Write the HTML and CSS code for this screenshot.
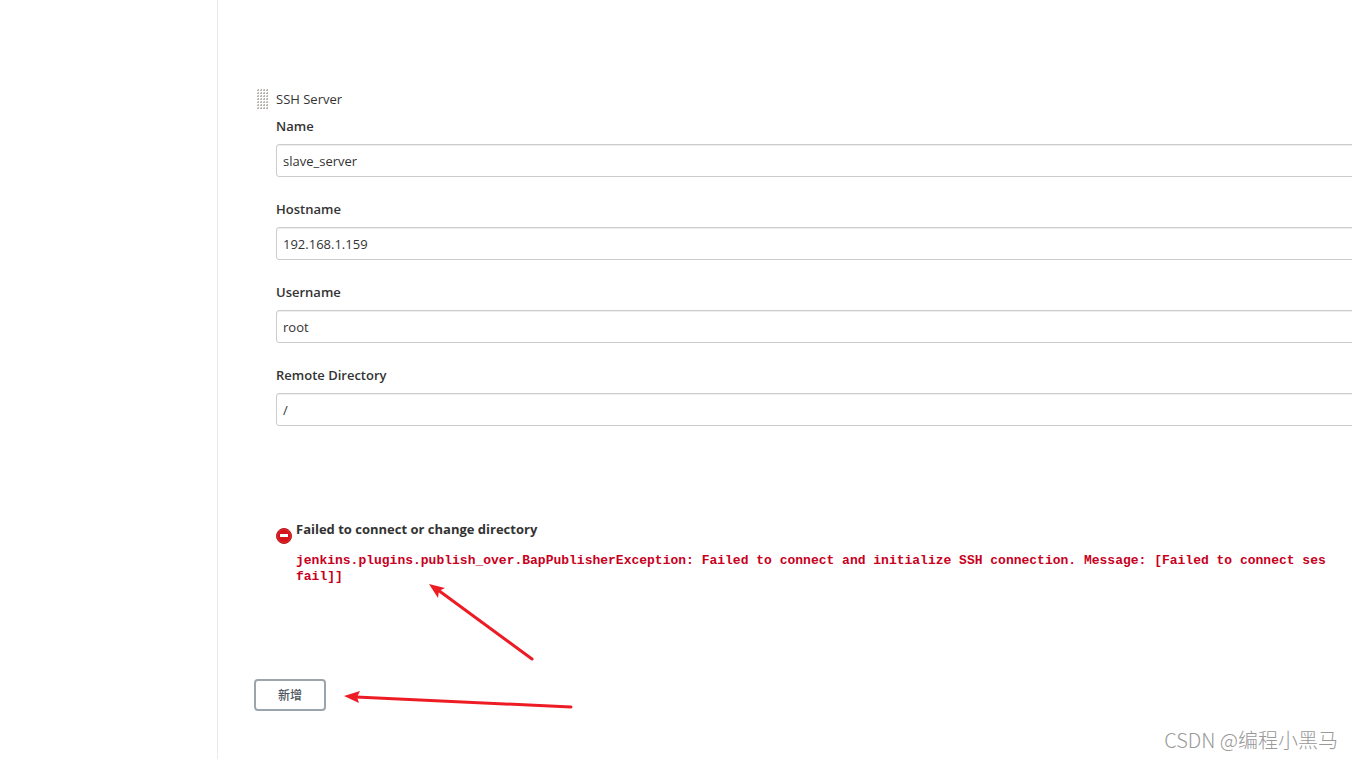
FILE: index.html
```
<!DOCTYPE html>
<html lang="zh-CN">
<head>
<meta charset="utf-8">
<title>SSH Server</title>
<link rel="stylesheet" href="styles.css">
</head>
<body>
<div class="page">
  <aside class="side"></aside>
  <main class="main">
    <form class="server">
      <div class="server-head">
        <svg class="grip" width="12" height="21" aria-hidden="true">
          <defs><pattern id="dots" width="3" height="3" patternUnits="userSpaceOnUse"><path d="M1 0h1v2h-2v-1h1z" fill="#b8b4ae"/><path d="M0 0h1v1h-1z" fill="#e3e1de"/></pattern></defs>
          <rect width="12" height="21" fill="url(#dots)"/>
        </svg>
        <span>SSH Server</span>
      </div>
      <div class="fields">
        <div class="field"><label for="name">Name</label><input id="name" type="text" value="slave_server"></div>
        <div class="field"><label for="host">Hostname</label><input id="host" type="text" value="192.168.1.159"></div>
        <div class="field"><label for="user">Username</label><input id="user" type="text" value="root"></div>
        <div class="field"><label for="dir">Remote Directory</label><input id="dir" type="text" value="/"></div>
      </div>
      <div class="error">
        <svg class="error-icon" width="16" height="16" viewBox="0 0 16 16" aria-hidden="true">
          <circle cx="8" cy="8" r="7.5" fill="#d4141a" stroke="#b81a1e"/>
          <circle cx="8" cy="8" r="6.5" fill="none" stroke="#e03a3e" stroke-width=".6"/>
          <rect x="4" y="6" width="8" height="3" fill="#fff"/>
        </svg>
        <div class="error-body">
          <strong class="error-title">Failed to connect or change directory</strong>
          <pre class="trace">jenkins.plugins.publish_over.BapPublisherException: Failed to connect and initialize SSH connection. Message: [Failed to connect ses
fail]]</pre>
        </div>
      </div>
      <button class="add" type="button">新增</button>
    </form>
  </main>
  <svg class="arrows" width="240" height="140" viewBox="340 575 240 140" aria-hidden="true">
    <g stroke="#ed1c24" stroke-width="3" stroke-linecap="round">
      <path d="M438 590L532 659M356 697L571 707"/>
    </g>
    <path fill="#ed1c24" d="M429 584L445 588L439 591L438 598ZM344 696L360 691L357 697L359 703Z"/>
  </svg>
  <div class="watermark">CSDN @编程小黑马</div>
</div>
</body>
</html>
```
FILE: styles.css
```
body {
  margin: 0;
  background: #fff;
  color: #333;
  font: 13px/20px "Open Sans", "Noto Sans CJK SC", sans-serif;
}
.page {
  position: relative;
  display: flex;
  min-height: 100vh;
  overflow: hidden;
}
.side {
  flex: 0 0 217px;
  border-right: 1px solid #eaeaea;
}
.main {
  flex: 1;
  min-width: 0;
  padding: 89px 0 48px 36px;
}
.server-head {
  display: flex;
  gap: 7px;
  margin-left: 3px;
}
.grip {
  flex: none;
}
.fields {
  display: flex;
  flex-direction: column;
  gap: 22px;
  margin: 6px -6px 0 22px;
}
.field {
  display: flex;
  flex-direction: column;
  gap: 8px;
}
.field label {
  font-weight: 600;
}
.field input {
  box-sizing: border-box;
  height: 33px;
  padding: 1px 6px 0;
  border: 1px solid #ccc;
  border-radius: 3px;
  box-shadow: inset 0 1px 1px #eee;
  color: #333;
  background: #fff;
  font: inherit;
}
.error {
  display: flex;
  gap: 4px;
  margin: 93px 0 0 22px;
}
.error-icon {
  flex: none;
  margin-top: 9px;
}
.error-title {
  display: block;
  font-weight: 700;
}
.trace {
  margin: 14px 0 0;
  color: #c8001e;
  font: bold 13px/16px "Liberation Mono", monospace;
}
.add {
  display: block;
  width: 72px;
  height: 32px;
  margin-top: 94px;
  padding: 0;
  border: 2px solid #9aa5ae;
  border-radius: 4px;
  background: #fff;
  color: #4d545d;
  font: 500 12px/20px "Noto Sans CJK SC", sans-serif;
}
.arrows {
  position: absolute;
  left: 340px;
  top: 575px;
}
.watermark {
  position: absolute;
  right: 14px;
  bottom: 4px;
  color: #999;
  font: 300 20px/30px "Noto Sans CJK SC", sans-serif;
}
```
